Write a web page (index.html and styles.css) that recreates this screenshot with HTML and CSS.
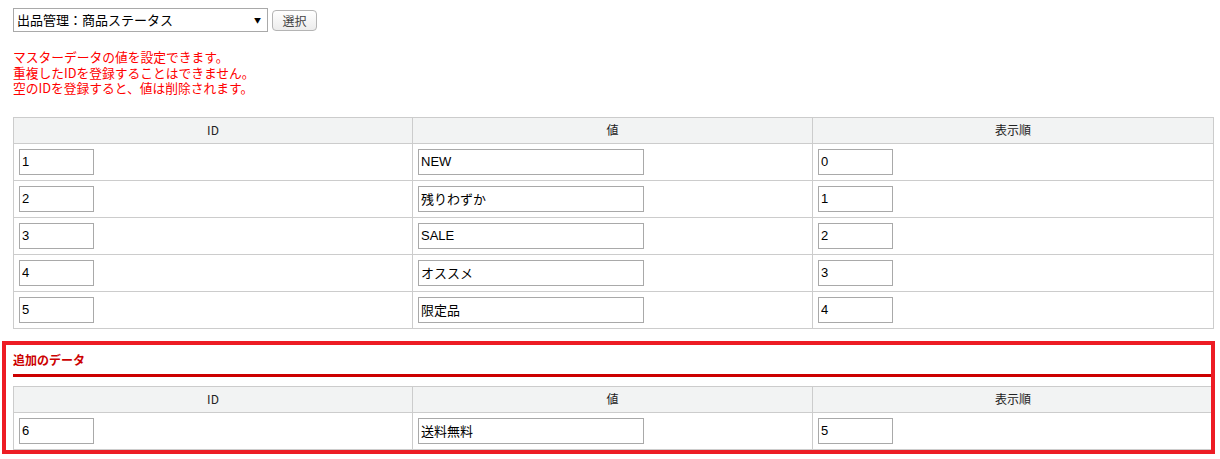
FILE: index.html
```html
<!DOCTYPE html>
<html lang="ja">
<head>
<meta charset="utf-8">
<title>マスターデータ管理</title>
<link rel="stylesheet" href="styles.css">
</head>
<body>
<div class="page">
  <form class="picker">
    <span class="select-wrap">
      <select class="select">
        <option>出品管理：商品ステータス</option>
      </select>
    </span>
    <button type="button" class="btn">選択</button>
  </form>

  <p class="notice">マスターデータの値を設定できます。<br>重複したIDを登録することはできません。<br>空のIDを登録すると、値は削除されます。</p>

  <table class="grid">
    <colgroup><col class="c1"><col class="c2"><col class="c3"></colgroup>
    <thead>
      <tr><th>ID</th><th>値</th><th>表示順</th></tr>
    </thead>
    <tbody>
      <tr><td><input class="in-s" value="1"></td><td><input class="in-l" value="NEW"></td><td><input class="in-s" value="0"></td></tr>
      <tr><td><input class="in-s" value="2"></td><td><input class="in-l" value="残りわずか"></td><td><input class="in-s" value="1"></td></tr>
      <tr><td><input class="in-s" value="3"></td><td><input class="in-l" value="SALE"></td><td><input class="in-s" value="2"></td></tr>
      <tr><td><input class="in-s" value="4"></td><td><input class="in-l" value="オススメ"></td><td><input class="in-s" value="3"></td></tr>
      <tr><td><input class="in-s" value="5"></td><td><input class="in-l" value="限定品"></td><td><input class="in-s" value="4"></td></tr>
    </tbody>
  </table>

  <section class="extra">
    <h2 class="extra-title">追加のデータ</h2>
    <table class="grid grid-extra">
      <colgroup><col class="c1"><col class="c2"><col class="c3"></colgroup>
      <thead>
        <tr><th>ID</th><th>値</th><th>表示順</th></tr>
      </thead>
      <tbody>
        <tr><td><input class="in-s" value="6"></td><td><input class="in-l" value="送料無料"></td><td><input class="in-s" value="5"></td></tr>
      </tbody>
    </table>
    <div class="highlight"></div>
  </section>
</div>
</body>
</html>
```

FILE: styles.css
```css
html, body {
  margin: 0;
  padding: 0;
  background: #ffffff;
}

body {
  font-family: "Noto Sans CJK JP", "Noto Sans", sans-serif;
  font-size: 12px;
  color: #333333;
}

.page {
  padding: 8px 0 10px 13px;
  width: 1200px;
}

.picker {
  display: flex;
  align-items: center;
  gap: 4px;
  margin: 0;
  height: 24px;
}

.select-wrap {
  position: relative;
  display: inline-block;
}

.select-wrap::after {
  content: "▼";
  position: absolute;
  right: 7px;
  top: 5px;
  font-size: 7px;
  line-height: 14px;
  color: #000;
  pointer-events: none;
}

.select {
  appearance: none;
  -webkit-appearance: none;
  display: block;
  width: 255px;
  height: 24px;
  border: 1px solid #a9a9a9;
  border-radius: 0;
  background: #fff;
  font-family: "Noto Sans CJK JP", sans-serif;
  font-size: 13px;
  color: #000;
  padding: 0 0 0 3px;
  margin: 0;
  line-height: 22px;
}

.btn {
  width: 45px;
  height: 21px;
  border: 1px solid #b4b4b4;
  border-radius: 4px;
  background: linear-gradient(#ffffff, #ececec);
  font-family: "Noto Sans CJK JP", sans-serif;
  font-size: 12px;
  color: #444;
  padding: 0;
  margin: 0;
  line-height: 19px;
}

.notice {
  margin: 17px 0 0 0;
  color: #ff0000;
  font-size: 12.75px;
  line-height: 15.5px;
}

.grid {
  width: 1200px;
  border-collapse: collapse;
  table-layout: fixed;
  margin-top: 21px;
}

.c1 { width: 399px; }
.c2 { width: 400px; }
.c3 { width: 401px; }

.grid th,
.grid td {
  border: 1px solid #cccccc;
}

.grid th {
  background: #f2f3f3;
  font-weight: normal;
  font-size: 12px;
  color: #222;
  height: 25px;
  padding: 0;
  text-align: center;
  line-height: 16px;
}

.grid td {
  padding: 5px 5px;
  height: 26px;
  text-align: left;
}

.grid input {
  display: block;
  box-sizing: border-box;
  height: 26px;
  border: 1px solid #a9a9a9;
  padding: 0 2px;
  margin: 0;
  font-family: "Liberation Sans", "Noto Sans CJK JP", sans-serif;
  font-size: 13px;
  color: #000;
  background: #fff;
}

.in-s {
  width: 75px;
}

.in-l {
  width: 226px;
}

.extra {
  position: relative;
  margin-top: 23px;
}

.extra-title {
  margin: 0;
  font-size: 12px;
  font-weight: bold;
  line-height: 16px;
  color: #cc0000;
  padding-bottom: 6px;
  border-bottom: 3px solid #cc0000;
}

.grid-extra {
  margin-top: 9px;
}

.highlight {
  position: absolute;
  left: -11px;
  right: -2px;
  top: -11px;
  bottom: -4px;
  border: 4px solid #ed1c24;
  pointer-events: none;
}
```
